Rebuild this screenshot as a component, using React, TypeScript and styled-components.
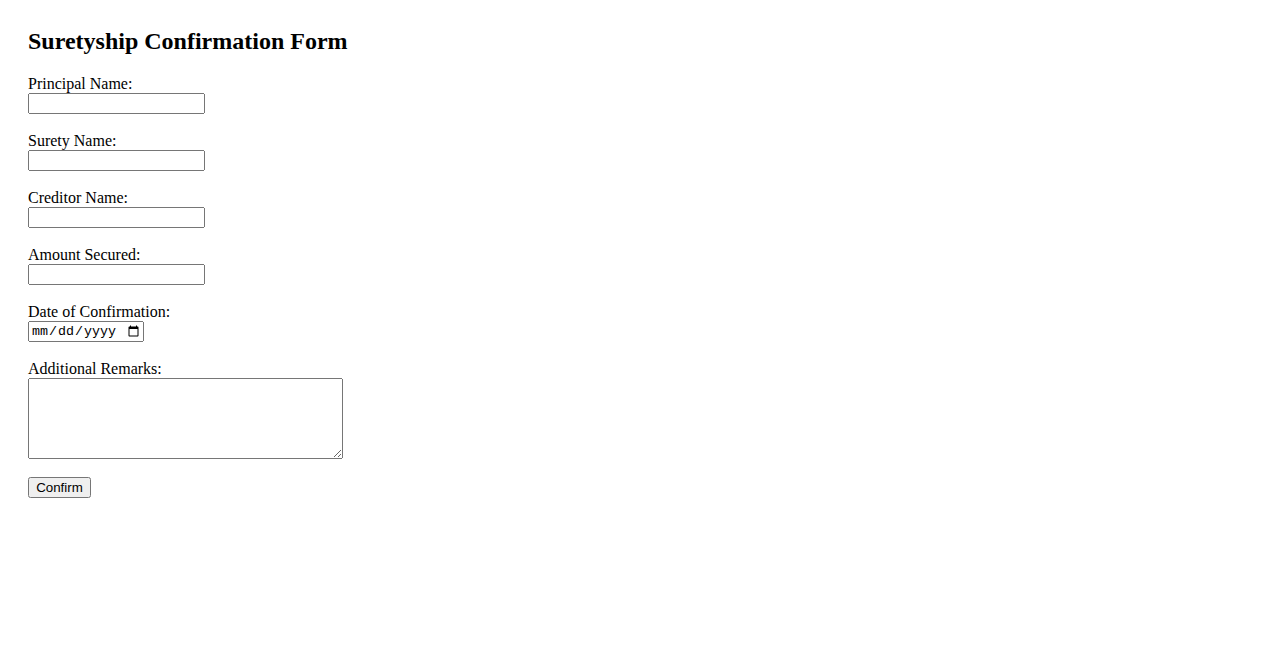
import React from "react";
import styled, { createGlobalStyle } from "styled-components";

const Global = createGlobalStyle`
  html, body { background: #ffffff; }
  body {
    margin: 8px;
    font-family: "Liberation Serif", "Times New Roman", serif;
    font-size: 16px;
    color: #000000;
  }
`;

const Page = styled.div`
  padding: 19px 20px 20px 20px;
`;

const Title = styled.h2`
  margin: 0 0 20px 0;
  font-size: 24px;
  line-height: 28px;
  font-weight: bold;
`;

const Form = styled.form`
  display: flex;
  flex-direction: column;
  align-items: flex-start;
`;

const Group = styled.div<{ $gap?: number }>`
  display: flex;
  flex-direction: column;
  align-items: flex-start;
  margin-bottom: ${(p) => (p.$gap ?? 18)}px;
`;

const Label = styled.label`
  display: block;
  line-height: 18px;
  height: 18px;
`;

const TextInput = styled.input`
  box-sizing: border-box;
  margin: 0;
  width: 177px;
  height: 21px;
  font-family: "Liberation Sans", Arial, sans-serif;
  font-size: 13.333px;
`;

const DateInput = styled.input`
  box-sizing: border-box;
  margin: 0;
  width: 116px;
  height: 21px;
  font-family: "Liberation Mono", monospace;
  font-size: 13.333px;
`;

const Remarks = styled.textarea`
  box-sizing: border-box;
  margin: 0;
  width: 315px;
  height: 81px;
  font-family: "Liberation Mono", monospace;
  font-size: 13.333px;
`;

const Button = styled.button`
  box-sizing: border-box;
  margin: 0;
  height: 21px;
  width: 63px;
  padding: 1px 6px;
  font-family: "Liberation Sans", Arial, sans-serif;
  font-size: 13.333px;
  color: #000;
`;

const fields = [
  { id: "principal", label: "Principal Name:" },
  { id: "surety", label: "Surety Name:" },
  { id: "creditor", label: "Creditor Name:" },
  { id: "amount", label: "Amount Secured:" },
];

export default function App() {
  return (
    <>
      <Global />
      <Page>
        <Title>Suretyship Confirmation Form</Title>
        <Form onSubmit={(e) => e.preventDefault()}>
          {fields.map((f) => (
            <Group key={f.id}>
              <Label htmlFor={f.id}>{f.label}</Label>
              <TextInput id={f.id} type="text" />
            </Group>
          ))}
          <Group>
            <Label htmlFor="date">Date of Confirmation:</Label>
            <DateInput id="date" type="date" />
          </Group>
          <Group>
            <Label htmlFor="remarks">Additional Remarks:</Label>
            <Remarks id="remarks" />
          </Group>
          <Button type="submit">Confirm</Button>
        </Form>
      </Page>
    </>
  );
}
